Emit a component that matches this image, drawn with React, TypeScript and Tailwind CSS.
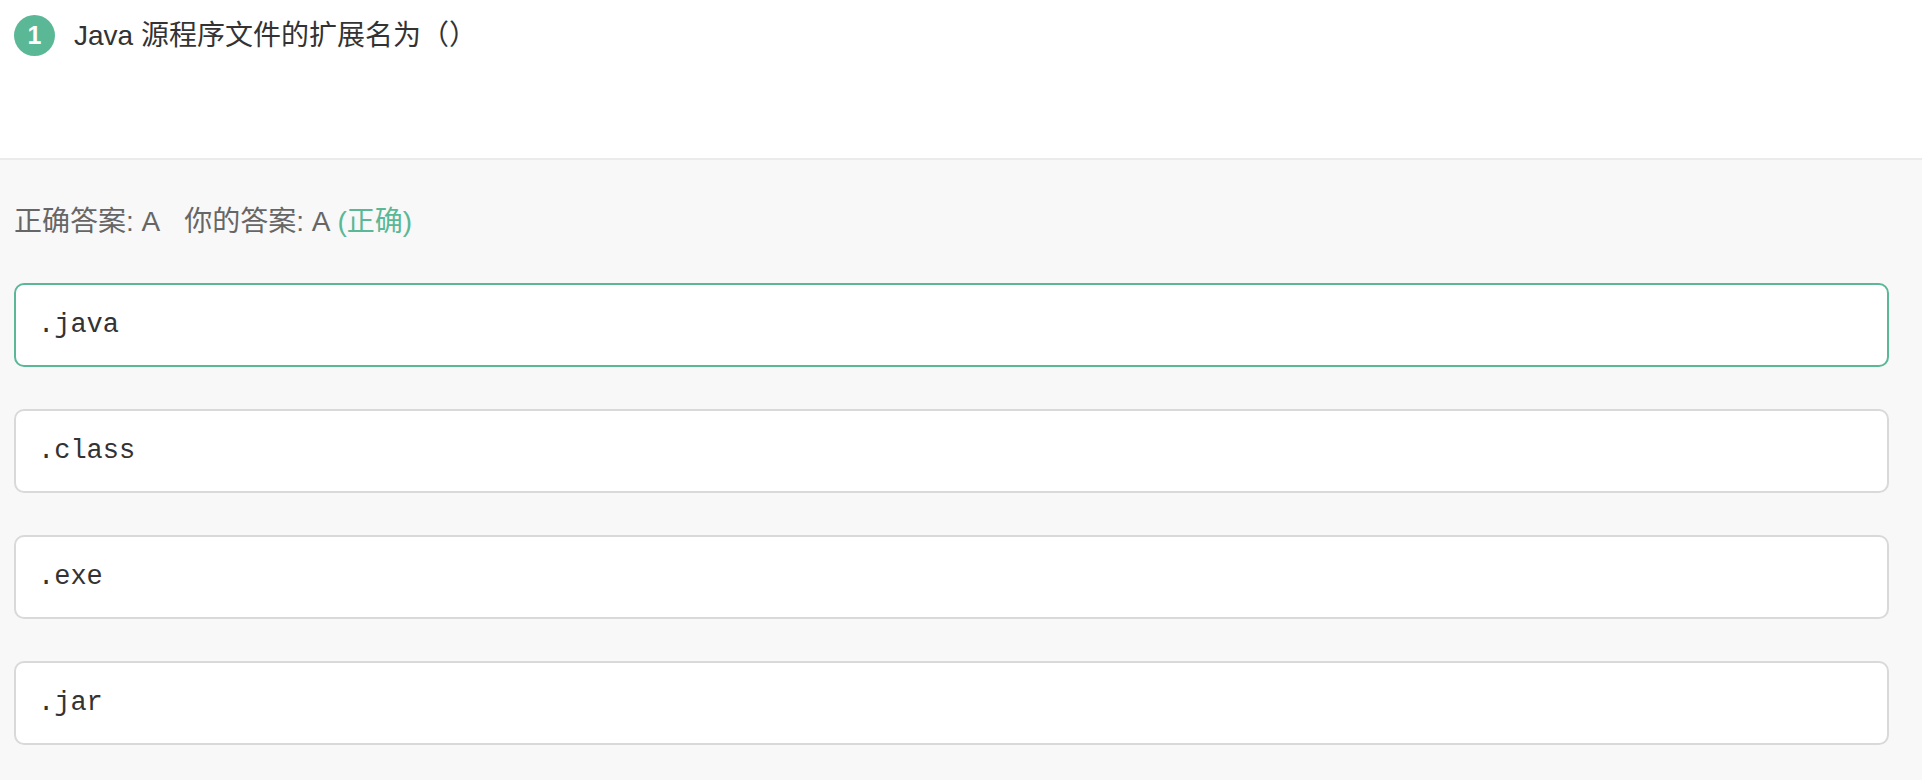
const options = [
  { key: "A", text: ".java" },
  { key: "B", text: ".class" },
  { key: "C", text: ".exe" },
  { key: "D", text: ".jar" },
]

const sans = "font-['Liberation_Sans','Noto_Sans_CJK_SC',sans-serif]"

export default function App() {
  const correct = "A"
  const mine = "A"

  return (
    <div className={`flex min-h-screen flex-col bg-[#f8f8f8] ${sans} [text-spacing-trim:space-all]`}>
      <div className="h-[160px] bg-white border-b-2 border-[#ebebeb] px-[14px] pt-[15px]">
        <div className="flex items-center gap-[19px]">
          <span className="flex h-[41px] w-[41px] items-center justify-center rounded-full bg-[#5ab897] text-[25px] font-semibold text-white">
            1
          </span>
          <h1 className="text-[28px] leading-[40px] text-[#333]">Java 源程序文件的扩展名为（）</h1>
        </div>
      </div>
      <div className="flex flex-col pl-[14px] pr-[33px] pt-[44px] pb-[35px]">
        <p className="text-[28px] leading-[36px] text-[#666]">
          正确答案: {correct}
          <span className="ml-[24px]">你的答案: {mine}</span>
          <span className="ml-[7px] text-[#5ab897]">(正确)</span>
        </p>
        <div className="mt-[43px] flex flex-col gap-[42px]">
          {options.map((opt) => (
            <div
              key={opt.key}
              className={`flex h-[84px] items-center rounded-[10px] border-2 bg-white pl-[22px] ${
                opt.key === correct ? "border-[#5ab897]" : "border-[#d9d9d9]"
              }`}
            >
              <span className="font-['Liberation_Mono',monospace] text-[27px] text-[#333]">{opt.text}</span>
            </div>
          ))}
        </div>
      </div>
    </div>
  )
}
